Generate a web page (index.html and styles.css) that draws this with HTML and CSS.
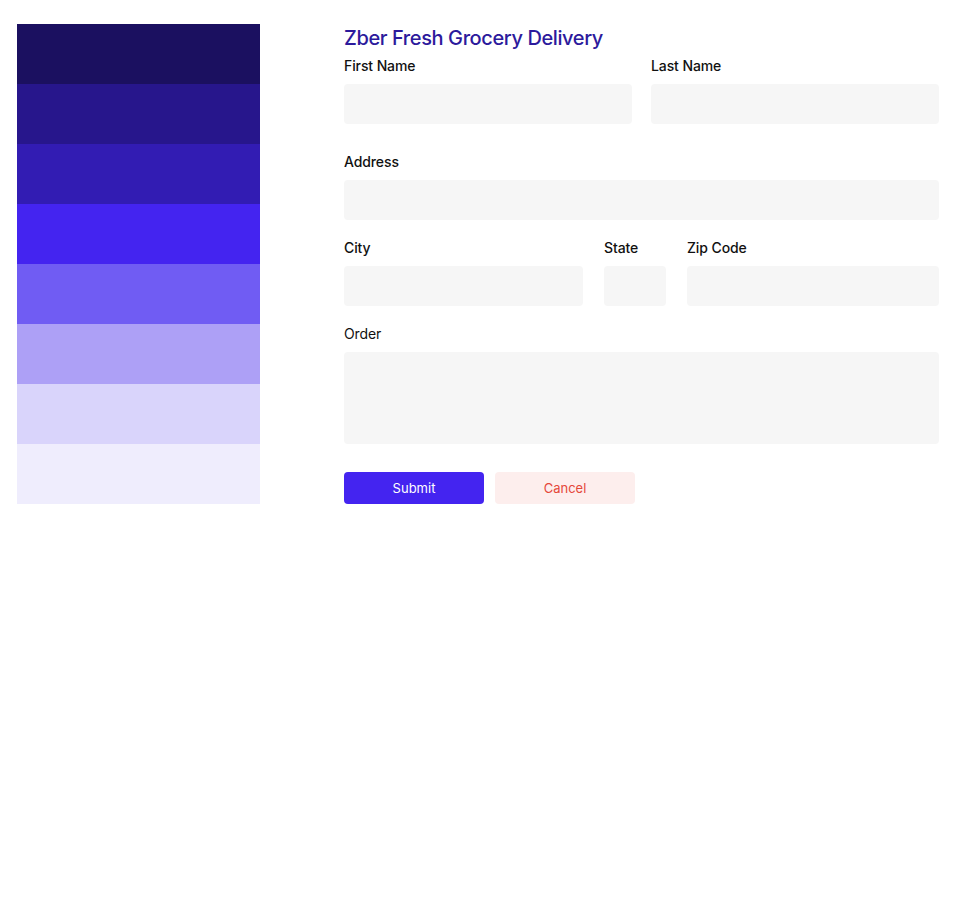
FILE: index.html
```html
<!DOCTYPE html>
<html>
<head>
<meta charset="utf-8">
<link rel="stylesheet" href="styles.css">
</head>
<body>
<div class="page">
  <div class="palette">
    <div class="sw c1"></div>
    <div class="sw c2"></div>
    <div class="sw c3"></div>
    <div class="sw c4"></div>
    <div class="sw c5"></div>
    <div class="sw c6"></div>
    <div class="sw c7"></div>
    <div class="sw c8"></div>
  </div>
  <form class="form">
    <h1 class="title">Zber Fresh Grocery Delivery</h1>
    <div class="row row-2">
      <div class="field"><label class="label">First Name</label><div class="input"></div></div>
      <div class="field"><label class="label">Last Name</label><div class="input"></div></div>
    </div>
    <div class="row row-addr">
      <div class="field"><label class="label">Address</label><div class="input"></div></div>
    </div>
    <div class="row row-3">
      <div class="field"><label class="label">City</label><div class="input"></div></div>
      <div class="field"><label class="label">State</label><div class="input"></div></div>
      <div class="field"><label class="label">Zip Code</label><div class="input"></div></div>
    </div>
    <div class="row row-order">
      <div class="field"><label class="label light">Order</label><div class="input area"></div></div>
    </div>
    <div class="buttons">
      <button type="button" class="btn primary">Submit</button>
      <button type="button" class="btn cancel">Cancel</button>
    </div>
  </form>
</div>
</body>
</html>
```
FILE: styles.css
```css
html, body {
  margin: 0;
  padding: 0;
  background: #fff;
  font-family: "Inter", "Open Sans", sans-serif;
}
.page {
  display: flex;
  padding: 24px 33px 0 17px;
  gap: 84px;
  align-items: flex-start;
}
.palette {
  width: 243px;
  flex: none;
  display: flex;
  flex-direction: column;
}
.sw { height: 60px; }
.c1 { background: #1b1060; }
.c2 { background: #27168c; }
.c3 { background: #321cb3; }
.c4 { background: #4424f0; }
.c5 { background: #705cf3; }
.c6 { background: #ada0f6; }
.c7 { background: #d9d4fb; }
.c8 { background: #efedfd; }
.form {
  flex: 1;
  display: flex;
  flex-direction: column;
}
.title {
  margin: 2px 0 6px;
  font-size: 20px;
  line-height: 24px;
  font-weight: 500;
  color: #2c1a9c;
  letter-spacing: -0.4px;
}
.row { display: grid; }
.row-2 { grid-template-columns: 1fr 1fr; column-gap: 19px; }
.row-3 { grid-template-columns: 239px 62px 1fr; column-gap: 21px; margin-top: 18px; }
.row-addr { margin-top: 28px; }
.row-order { margin-top: 18px; }
.field { display: flex; flex-direction: column; }
.label {
  font-size: 14px;
  line-height: 20px;
  font-weight: 500;
  color: #111;
  margin-bottom: 8px;
  letter-spacing: -0.1px;
}
.label.light { font-weight: 400; }
.input {
  height: 40px;
  background: #f6f6f6;
  border-radius: 4px;
}
.input.area { height: 92px; }
.buttons {
  display: flex;
  gap: 11px;
  margin-top: 28px;
}
.btn {
  width: 140px;
  height: 32px;
  border: none;
  border-radius: 4px;
  font-family: inherit;
  font-size: 13px;
  padding: 0;
}
.primary { background: #4424f0; color: #fff; }
.cancel { background: #fdeeed; color: #e5483a; }
```
